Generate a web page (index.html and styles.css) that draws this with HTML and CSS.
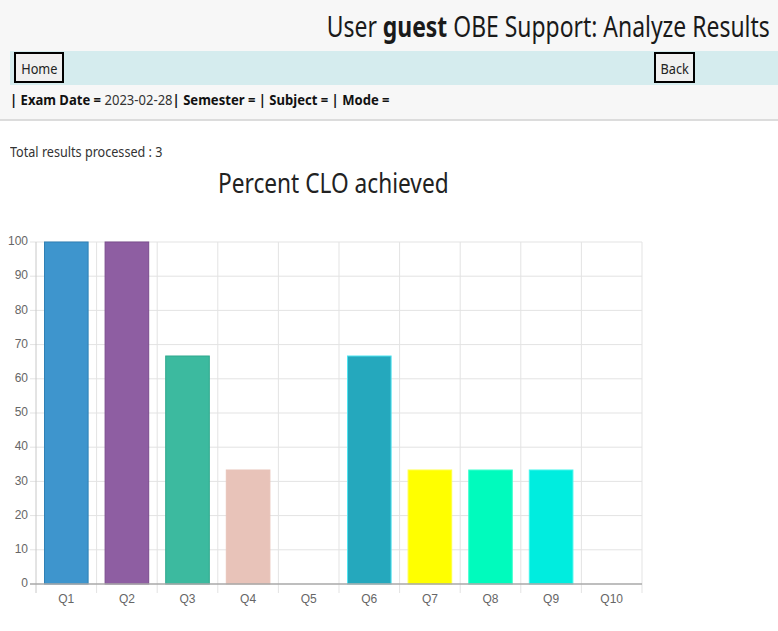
FILE: index.html
```html
<!DOCTYPE html>
<html lang="en">
<head>
<meta charset="utf-8">
<title>Analyze Results</title>
<link rel="stylesheet" href="styles.css">
</head>
<body>
<header class="top">
  <h1 class="title"><span class="narrow-r">User <b>guest</b> OBE Support: Analyze Results</span></h1>
  <nav class="nav">
    <button class="btn home"><span class="btn-text">Home</span></button>
    <button class="btn back"><span class="btn-text">Back</span></button>
  </nav>
  <p class="info"><span class="narrow-l"><b>| Exam Date = </b>2023-02-28<b>| Semester = | Subject = | Mode = </b></span></p>
</header>
<main class="main">
  <p class="total"><span class="narrow-t">Total results processed : 3</span></p>
  <section class="chart">
    <h2 class="chart-title"><span class="narrow-c">Percent CLO achieved</span></h2>
    <svg class="plot" width="646" height="412" viewBox="0 0 646 412">
      <g class="grid">
        <line x1="20" y1="43" x2="632" y2="43"/>
        <line x1="20" y1="77.2" x2="632" y2="77.2"/>
        <line x1="20" y1="111.4" x2="632" y2="111.4"/>
        <line x1="20" y1="145.6" x2="632" y2="145.6"/>
        <line x1="20" y1="179.8" x2="632" y2="179.8"/>
        <line x1="20" y1="214" x2="632" y2="214"/>
        <line x1="20" y1="248.2" x2="632" y2="248.2"/>
        <line x1="20" y1="282.4" x2="632" y2="282.4"/>
        <line x1="20" y1="316.6" x2="632" y2="316.6"/>
        <line x1="20" y1="350.8" x2="632" y2="350.8"/>
        <line x1="86.6" y1="43" x2="86.6" y2="394"/>
        <line x1="147.2" y1="43" x2="147.2" y2="394"/>
        <line x1="207.8" y1="43" x2="207.8" y2="394"/>
        <line x1="268.4" y1="43" x2="268.4" y2="394"/>
        <line x1="329" y1="43" x2="329" y2="394"/>
        <line x1="389.6" y1="43" x2="389.6" y2="394"/>
        <line x1="450.2" y1="43" x2="450.2" y2="394"/>
        <line x1="510.8" y1="43" x2="510.8" y2="394"/>
        <line x1="571.4" y1="43" x2="571.4" y2="394"/>
        <line x1="632" y1="43" x2="632" y2="394"/>
      </g>
      <line class="yaxis" x1="26" y1="43" x2="26" y2="394"/>
      <g class="bars">
        <rect x="34.5" y="43" width="43.6" height="342" fill="#3e95cd" stroke="#2f80b5"/>
        <rect x="95.1" y="43" width="43.6" height="342" fill="#8e5ea2" stroke="#7a4c8e"/>
        <rect x="155.7" y="157" width="43.6" height="228" fill="#3cba9f" stroke="#2fa88d"/>
        <rect x="216.3" y="271" width="43.6" height="114" fill="#e8c3b9" stroke="#e8c3b9"/>
        <rect x="337.5" y="157" width="43.6" height="228" fill="#25a8bd" stroke="#4fe3f0"/>
        <rect x="398.1" y="271" width="43.6" height="114" fill="#ffff00" stroke="#ffff44"/>
        <rect x="458.7" y="271" width="43.6" height="114" fill="#00fbbd" stroke="#40ffd0"/>
        <rect x="519.3" y="271" width="43.6" height="114" fill="#00eddf" stroke="#40f6ec"/>
      </g>
      <line class="zero" x1="20" y1="385" x2="632" y2="385"/>
      <g class="ylabels">
        <text x="18" y="43">100</text>
        <text x="18" y="77.2">90</text>
        <text x="18" y="111.4">80</text>
        <text x="18" y="145.6">70</text>
        <text x="18" y="179.8">60</text>
        <text x="18" y="214">50</text>
        <text x="18" y="248.2">40</text>
        <text x="18" y="282.4">30</text>
        <text x="18" y="316.6">20</text>
        <text x="18" y="350.8">10</text>
        <text x="18" y="385">0</text>
      </g>
      <g class="xlabels">
        <text x="56.3" y="401">Q1</text>
        <text x="116.9" y="401">Q2</text>
        <text x="177.5" y="401">Q3</text>
        <text x="238.1" y="401">Q4</text>
        <text x="298.7" y="401">Q5</text>
        <text x="359.3" y="401">Q6</text>
        <text x="419.9" y="401">Q7</text>
        <text x="480.5" y="401">Q8</text>
        <text x="541.1" y="401">Q9</text>
        <text x="601.7" y="401">Q10</text>
      </g>
    </svg>
  </section>
</main>
</body>
</html>
```

FILE: styles.css
```css
html, body {
  margin: 0;
  padding: 0;
  background: #ffffff;
}

body {
  font-family: "Noto Sans", "Open Sans", sans-serif;
  color: #212121;
}

.top {
  background: #f7f7f7;
  border-bottom: 2px solid #dcdcdc;
  height: 119px;
}

.title {
  margin: 0;
  height: 51px;
  line-height: 51px;
  text-align: right;
  padding-right: 8px;
  font-size: 29px;
  font-weight: normal;
  color: #1a1a1a;
  white-space: nowrap;
}

.title b {
  font-weight: bold;
}

.narrow-r {
  display: inline-block;
  transform: scaleX(0.79);
  transform-origin: right center;
}

.nav {
  margin-left: 10px;
  background: #d5ecee;
  height: 34px;
  display: flex;
  align-items: flex-start;
  padding-left: 4px;
  padding-right: 83px;
}

.btn {
  margin-top: 1px;
  height: 31px;
  border: 2px solid #000;
  background: #f0f0f0;
  font-family: "Noto Sans", "Open Sans", sans-serif;
  font-size: 15px;
  color: #222;
  padding: 0;
  display: flex;
  align-items: center;
  justify-content: center;
}

.home {
  width: 50px;
}

.back {
  width: 41px;
  margin-left: auto;
}

.btn-text {
  display: inline-block;
  transform: scaleX(0.85);
  white-space: nowrap;
}

.info {
  margin: 0;
  padding-left: 10px;
  height: 24px;
  line-height: 24px;
  margin-top: 2px;
  font-size: 15px;
  color: #333;
  white-space: nowrap;
}

.info b {
  color: #111;
}

.narrow-l {
  display: inline-block;
  transform: scaleX(0.87);
  transform-origin: left center;
}

.main {
  padding: 21px 0 0 10px;
}

.total {
  margin: 0;
  font-size: 14px;
  line-height: 20px;
  color: #333;
  white-space: nowrap;
}

.narrow-t {
  display: inline-block;
  transform: scaleX(0.9);
  transform-origin: left center;
}

.chart {
  width: 646px;
  margin-top: 5px;
}

.chart-title {
  margin: 0;
  text-align: center;
  font-size: 27px;
  line-height: 32px;
  font-weight: normal;
  color: #222;
  white-space: nowrap;
}

.narrow-c {
  display: inline-block;
  transform: scaleX(0.84);
  transform-origin: center center;
}

.plot {
  display: block;
  overflow: visible;
}

.grid line {
  stroke: #e3e3e3;
  stroke-width: 1;
}

.yaxis {
  stroke: #c8c8c8;
  stroke-width: 1;
}

.zero {
  stroke: #a8a8a8;
  stroke-width: 1.5;
}

.bars rect {
  stroke-width: 1;
}

.ylabels text {
  font-family: "Liberation Sans", Arial, sans-serif;
  font-size: 12px;
  fill: #666;
  text-anchor: end;
  dominant-baseline: middle;
}

.xlabels text {
  font-family: "Liberation Sans", Arial, sans-serif;
  font-size: 12px;
  fill: #666;
  text-anchor: middle;
  dominant-baseline: middle;
}
```
